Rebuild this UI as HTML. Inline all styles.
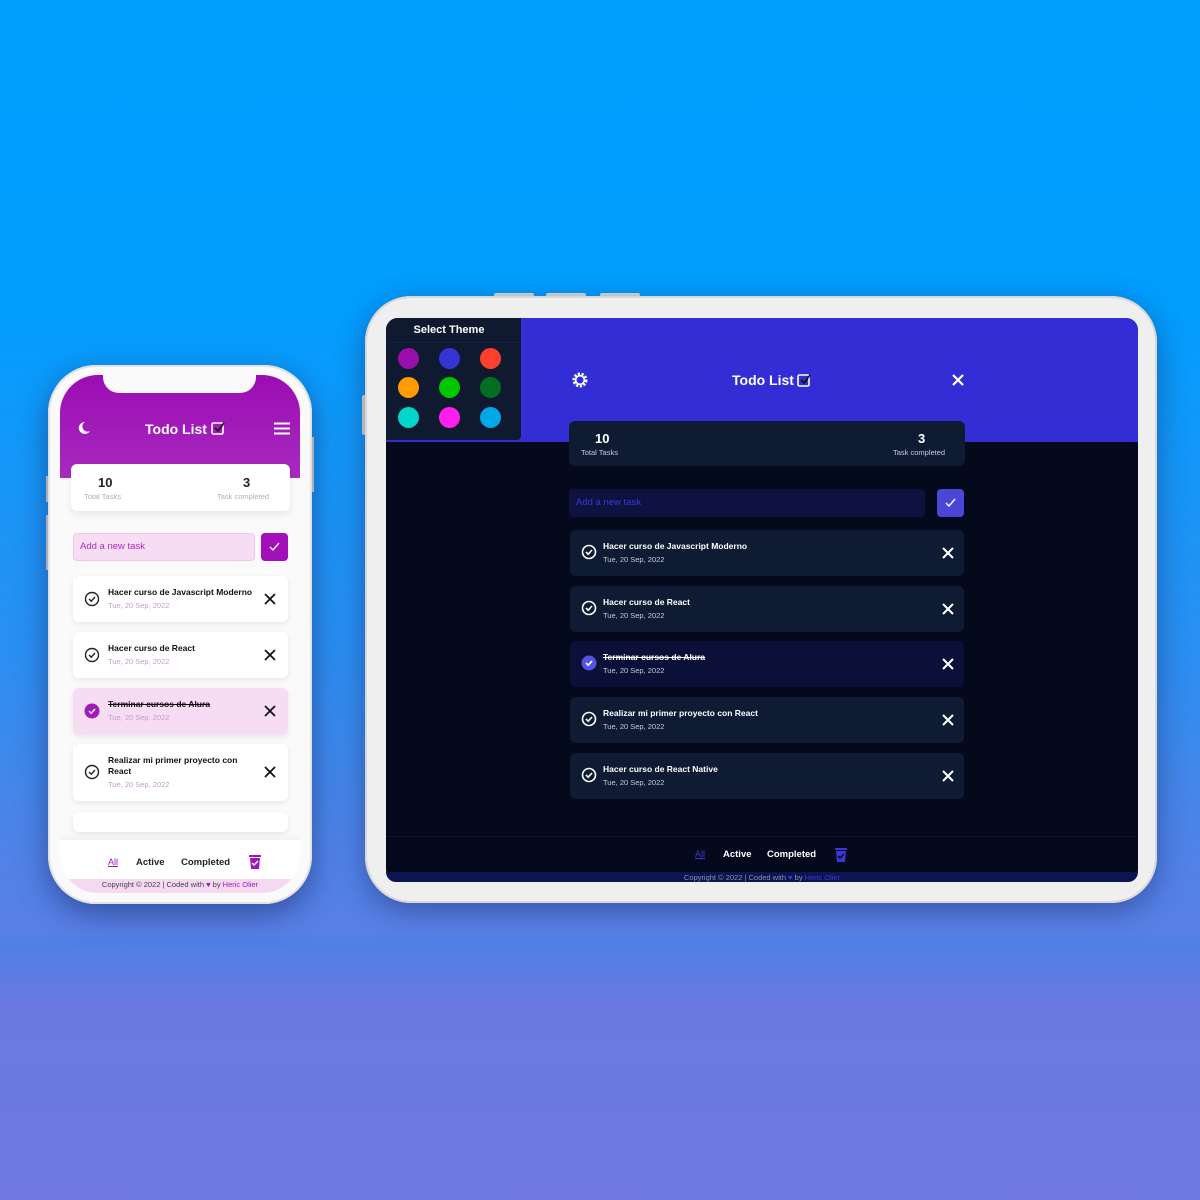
<!DOCTYPE html>
<html><head><meta charset="utf-8"><style>
*{margin:0;padding:0;box-sizing:border-box}
body{width:1200px;height:1200px;position:relative;overflow:hidden;font-family:"Liberation Sans",sans-serif;background:linear-gradient(180deg,#4f80e6 937px,#6a79e2 1010px,#6f78e2 1200px)}
.top{position:absolute;left:0;top:0;width:1200px;height:937px;background:linear-gradient(180deg,#009ffe 0px,#019efe 300px,#2a8ff2 650px,#4d84e8 830px,#5a80e6 937px)}
.a{position:absolute}
.b{font-weight:bold}
.tab{left:365px;top:296px;width:792px;height:607px;border-radius:46px;background:#efefef;box-shadow:0 8px 30px rgba(20,30,90,.45), inset 0 0 0 2px #d8d8d8}
.tscr{left:386px;top:318px;width:752px;height:564px;border-radius:12px;background:#040a1c;overflow:hidden}
.phone{left:48px;top:365px;width:264px;height:539px;border-radius:48px;background:#fafafa;box-shadow:0 10px 30px rgba(20,30,90,.5), inset 0 0 0 2px #e2e2e2}
.pscr{left:60px;top:375px;width:240px;height:518px;border-radius:38px;background:#fafafa;overflow:hidden}
.circ{position:absolute;width:21px;height:21px;border-radius:50%}
.tt{position:absolute;left:570px;width:394px;height:46px;border-radius:6px;background:#0e1b33}
.tt .t{position:absolute;left:33px;top:11px;color:#fff;font-size:8.5px;font-weight:bold}
.tt .d{position:absolute;left:33px;top:25px;color:#c8cbd8;font-size:7.5px}
.tt svg.c{position:absolute;left:11px;top:14px}
.tt svg.x{position:absolute;left:372px;top:17px}
.pt{position:absolute;left:73px;width:215px;border-radius:6px;background:#fff;box-shadow:0 2px 6px rgba(0,0,0,.08)}
.pt .t{position:absolute;left:35px;color:#111;font-size:8.5px;font-weight:bold;line-height:11px}
.pt .d{position:absolute;left:35px;color:#c39ccc;font-size:7.5px}
.pt svg.c{position:absolute;left:11px}
.pt svg.x{position:absolute;left:191px}
</style></head><body>
<div class="top"></div>
<div class="a" style="left:494px;top:293px;width:40px;height:4px;background:#ddd;border-radius:2px"></div>
<div class="a" style="left:546px;top:293px;width:40px;height:4px;background:#ddd;border-radius:2px"></div>
<div class="a" style="left:600px;top:293px;width:40px;height:4px;background:#ddd;border-radius:2px"></div>
<div class="a" style="left:362px;top:395px;width:4px;height:40px;background:#ddd;border-radius:2px"></div>
<div class="a tab"></div>
<div class="a tscr">
  <div class="a" style="left:0;top:0;width:752px;height:124px;background:#332dd5"></div>
  <div class="a" style="left:0;top:0;width:135px;height:122px;background:#0f1a31;border-radius:0 0 4px 0">
    <div class="a b" style="left:0;top:6px;width:126px;text-align:center;color:#fff;font-size:11px">Select Theme</div>
    <div class="a" style="left:0;top:24px;width:135px;height:1px;background:#162240"></div>
    <div class="circ" style="left:12px;top:30px;background:#9a0fab"></div>
    <div class="circ" style="left:53px;top:30px;background:#3535d6"></div>
    <div class="circ" style="left:94px;top:30px;background:#fd3f2e"></div>
    <div class="circ" style="left:12px;top:59px;background:#ff9a00"></div>
    <div class="circ" style="left:53px;top:59px;background:#01c600"></div>
    <div class="circ" style="left:94px;top:59px;background:#036d21"></div>
    <div class="circ" style="left:12px;top:89px;background:#00d6cc"></div>
    <div class="circ" style="left:53px;top:89px;background:#ff1eeb"></div>
    <div class="circ" style="left:94px;top:89px;background:#01a7e6"></div>
  </div>
</div>
<svg class="a" style="left:572px;top:372px" width="16" height="16" viewBox="0 0 16 16"><circle cx="8" cy="8" r="6" fill="none" stroke="#fff" stroke-width="3" stroke-dasharray="2.2 1.5"/><circle cx="8" cy="8" r="4.3" fill="none" stroke="#fff" stroke-width="1.6"/></svg>
<div class="a b" style="left:732px;top:372px;color:#fff;font-size:14px">Todo List</div>
<svg class="a" style="left:797px;top:373px" width="15" height="15" viewBox="0 0 15 15"><rect x="1" y="2" width="11" height="11" rx="1.5" fill="none" stroke="#fff" stroke-width="1.6"/><path d="M4 7l3 3 6-8" fill="none" stroke="#111" stroke-width="1.6"/></svg>
<svg class="a" style="left:951px;top:373px" width="14" height="14" viewBox="0 0 14 14"><path d="M2 2l10 10M12 2L2 12" stroke="#fff" stroke-width="2.2"/></svg>
<div class="a" style="left:569px;top:421px;width:396px;height:45px;border-radius:6px;background:#0f1b33"></div>
<div class="a b" style="left:595px;top:431px;color:#fff;font-size:13px">10</div>
<div class="a" style="left:581px;top:448px;color:#c8cbd8;font-size:7.5px">Total Tasks</div>
<div class="a b" style="left:918px;top:431px;color:#fff;font-size:13px">3</div>
<div class="a" style="left:893px;top:448px;color:#c8cbd8;font-size:7.5px">Task completed</div>
<div class="a" style="left:569px;top:489px;width:356px;height:28px;border-radius:4px;background:#0d1240"></div>
<div class="a" style="left:576px;top:497px;color:#3c3ad8;font-size:9.5px">Add a new task</div>
<div class="a" style="left:937px;top:489px;width:27px;height:28px;border-radius:4px;background:#4a47d8"></div>
<svg class="a" style="left:944px;top:496px" width="13" height="13"><path d="M2 7l3 3 6-7" fill="none" stroke="#fff" stroke-width="1.4"/></svg>

<div class="tt" style="top:530px"><svg class="c" width="16" height="16"><circle cx="8" cy="8" r="6.5" fill="none" stroke="#fff" stroke-width="1.6"/><path d="M5 8l2.2 2.2L11 6" fill="none" stroke="#fff" stroke-width="1.6"/></svg><div class="t">Hacer curso de Javascript Moderno</div><div class="d">Tue, 20 Sep, 2022</div><svg class="x" width="12" height="12"><path d="M1 1l10 10M11 1L1 11" stroke="#fff" stroke-width="2"/></svg></div>
<div class="tt" style="top:586px"><svg class="c" width="16" height="16"><circle cx="8" cy="8" r="6.5" fill="none" stroke="#fff" stroke-width="1.6"/><path d="M5 8l2.2 2.2L11 6" fill="none" stroke="#fff" stroke-width="1.6"/></svg><div class="t">Hacer curso de React</div><div class="d">Tue, 20 Sep, 2022</div><svg class="x" width="12" height="12"><path d="M1 1l10 10M11 1L1 11" stroke="#fff" stroke-width="2"/></svg></div>
<div class="tt" style="top:641px;background:#0a1038"><svg class="c" width="16" height="16"><circle cx="8" cy="8" r="7.5" fill="#5553e0"/><path d="M5 8l2.2 2.2L11 6" fill="none" stroke="#fff" stroke-width="1.6"/></svg><div class="t" style="text-decoration:line-through">Terminar cursos de Alura</div><div class="d">Tue, 20 Sep, 2022</div><svg class="x" width="12" height="12"><path d="M1 1l10 10M11 1L1 11" stroke="#fff" stroke-width="2"/></svg></div>
<div class="tt" style="top:697px"><svg class="c" width="16" height="16"><circle cx="8" cy="8" r="6.5" fill="none" stroke="#fff" stroke-width="1.6"/><path d="M5 8l2.2 2.2L11 6" fill="none" stroke="#fff" stroke-width="1.6"/></svg><div class="t">Realizar mi primer proyecto con React</div><div class="d">Tue, 20 Sep, 2022</div><svg class="x" width="12" height="12"><path d="M1 1l10 10M11 1L1 11" stroke="#fff" stroke-width="2"/></svg></div>
<div class="tt" style="top:753px"><svg class="c" width="16" height="16"><circle cx="8" cy="8" r="6.5" fill="none" stroke="#fff" stroke-width="1.6"/><path d="M5 8l2.2 2.2L11 6" fill="none" stroke="#fff" stroke-width="1.6"/></svg><div class="t">Hacer curso de React Native</div><div class="d">Tue, 20 Sep, 2022</div><svg class="x" width="12" height="12"><path d="M1 1l10 10M11 1L1 11" stroke="#fff" stroke-width="2"/></svg></div>

<div class="a" style="left:386px;top:836px;width:752px;height:1px;background:#0d1630"></div>
<div class="a" style="left:695px;top:849px;color:#3a38d8;font-size:9px;text-decoration:underline">All</div>
<div class="a b" style="left:723px;top:849px;color:#fff;font-size:9.5px">Active</div>
<div class="a b" style="left:767px;top:849px;color:#fff;font-size:9.5px">Completed</div>
<svg class="a" style="left:834px;top:847px" width="14" height="16" viewBox="0 0 14 16"><rect x="1" y="1" width="12" height="2" fill="#3a38d8"/><path d="M2 4h10l-1 11H3z" fill="#3a38d8"/><path d="M4 9l2 2 4-4" fill="none" stroke="#040a1c" stroke-width="1.5"/></svg>
<div class="a" style="left:386px;top:872px;width:752px;height:10px;background:#0c1550;border-radius:0 0 12px 12px;overflow:hidden"><div style="text-align:center;color:#8890b0;font-size:7.5px;line-height:12px">Copyright © 2022 | Coded with <span style="color:#3a38d8">♥</span> by <span style="color:#3a38d8">Heric Olier</span></div></div>

<div class="a" style="left:46px;top:476px;width:4px;height:26px;background:#ddd"></div>
<div class="a" style="left:46px;top:515px;width:4px;height:55px;background:#ddd"></div>
<div class="a" style="left:310px;top:437px;width:4px;height:55px;background:#ddd"></div>
<div class="a phone"></div>
<div class="a pscr">
  <div class="a" style="left:0;top:0;width:240px;height:103px;background:linear-gradient(180deg,#9b0cb3,#a82ac0)"></div>
  <div class="a" style="left:43px;top:0;width:153px;height:18px;background:#fafafa;border-radius:0 0 16px 16px"></div>
  <div class="a" style="left:0;top:465px;width:240px;height:40px;background:#fff;box-shadow:0 -3px 6px rgba(0,0,0,.04)"></div>
  <div class="a" style="left:0;top:504px;width:240px;height:14px;background:#f5d9f2"><div style="text-align:center;color:#444;font-size:7.5px;line-height:12px">Copyright © 2022 | Coded with <span style="color:#9b12b3">♥</span> by <span style="color:#a316bb">Heric Olier</span></div></div>
</div>
<svg class="a" style="left:77px;top:421px" width="14" height="14" viewBox="0 0 14 14"><path d="M8 1a6 6 0 1 0 5 9A5 5 0 0 1 8 1z" fill="#fff"/></svg>
<div class="a b" style="left:145px;top:421px;color:#fff;font-size:14px">Todo List</div>
<svg class="a" style="left:211px;top:421px" width="15" height="15" viewBox="0 0 15 15"><rect x="1" y="2" width="11" height="11" rx="1.5" fill="none" stroke="#fff" stroke-width="1.6"/><path d="M4 7l3 3 6-8" fill="none" stroke="#111" stroke-width="1.6"/></svg>
<svg class="a" style="left:274px;top:422px" width="16" height="13"><path d="M0 1.5h16M0 6.5h16M0 11.5h16" stroke="#fff" stroke-width="2"/></svg>
<div class="a" style="left:71px;top:464px;width:219px;height:47px;border-radius:6px;background:#fff;box-shadow:0 3px 8px rgba(0,0,0,.08)"></div>
<div class="a b" style="left:98px;top:475px;color:#222;font-size:13px">10</div>
<div class="a" style="left:84px;top:492px;color:#b9a9c1;font-size:7.5px">Total Tasks</div>
<div class="a b" style="left:243px;top:475px;color:#222;font-size:13px">3</div>
<div class="a" style="left:217px;top:492px;color:#b9a9c1;font-size:7.5px">Task completed</div>
<div class="a" style="left:73px;top:533px;width:182px;height:28px;border-radius:4px;background:#f6ddf4;border:1px solid #edc6ec"></div>
<div class="a" style="left:80px;top:541px;color:#b02cc0;font-size:9.5px">Add a new task</div>
<div class="a" style="left:261px;top:533px;width:27px;height:28px;border-radius:4px;background:#a30fb8"></div>
<svg class="a" style="left:268px;top:540px" width="13" height="13"><path d="M2 7l3 3 6-7" fill="none" stroke="#fff" stroke-width="1.4"/></svg>

<div class="pt" style="top:576px;height:46px"><svg class="c" style="top:15px" width="16" height="16"><circle cx="8" cy="8" r="6.5" fill="none" stroke="#222" stroke-width="1.4"/><path d="M5 8l2.2 2.2L11 6" fill="none" stroke="#222" stroke-width="1.4"/></svg><div class="t" style="top:11px">Hacer curso de Javascript Moderno</div><div class="d" style="top:25px">Tue, 20 Sep, 2022</div><svg class="x" style="top:17px" width="12" height="12"><path d="M1 1l10 10M11 1L1 11" stroke="#111" stroke-width="1.8"/></svg></div>
<div class="pt" style="top:632px;height:46px"><svg class="c" style="top:15px" width="16" height="16"><circle cx="8" cy="8" r="6.5" fill="none" stroke="#222" stroke-width="1.4"/><path d="M5 8l2.2 2.2L11 6" fill="none" stroke="#222" stroke-width="1.4"/></svg><div class="t" style="top:11px">Hacer curso de React</div><div class="d" style="top:25px">Tue, 20 Sep, 2022</div><svg class="x" style="top:17px" width="12" height="12"><path d="M1 1l10 10M11 1L1 11" stroke="#111" stroke-width="1.8"/></svg></div>
<div class="pt" style="top:688px;height:47px;background:#f6ddf3"><svg class="c" style="top:15px" width="16" height="16"><circle cx="8" cy="8" r="7.5" fill="#a41ab9"/><path d="M5 8l2.2 2.2L11 6" fill="none" stroke="#fff" stroke-width="1.4"/></svg><div class="t" style="top:11px;text-decoration:line-through">Terminar cursos de Alura</div><div class="d" style="top:25px">Tue, 20 Sep, 2022</div><svg class="x" style="top:17px" width="12" height="12"><path d="M1 1l10 10M11 1L1 11" stroke="#111" stroke-width="1.8"/></svg></div>
<div class="pt" style="top:744px;height:57px"><svg class="c" style="top:20px" width="16" height="16"><circle cx="8" cy="8" r="6.5" fill="none" stroke="#222" stroke-width="1.4"/><path d="M5 8l2.2 2.2L11 6" fill="none" stroke="#222" stroke-width="1.4"/></svg><div class="t" style="top:11px;width:145px">Realizar mi primer proyecto con React</div><div class="d" style="top:36px">Tue, 20 Sep, 2022</div><svg class="x" style="top:22px" width="12" height="12"><path d="M1 1l10 10M11 1L1 11" stroke="#111" stroke-width="1.8"/></svg></div>
<div class="pt" style="top:812px;height:20px"></div>
<div class="a" style="left:108px;top:857px;color:#a316bb;font-size:9px;text-decoration:underline">All</div>
<div class="a b" style="left:136px;top:857px;color:#222;font-size:9.5px">Active</div>
<div class="a b" style="left:181px;top:857px;color:#222;font-size:9.5px">Completed</div>
<svg class="a" style="left:248px;top:854px" width="14" height="16" viewBox="0 0 14 16"><rect x="1" y="1" width="12" height="2" fill="#a316bb"/><path d="M2 4h10l-1 11H3z" fill="#a316bb"/><path d="M4 9l2 2 4-4" fill="none" stroke="#fff" stroke-width="1.5"/></svg>
</body></html>
